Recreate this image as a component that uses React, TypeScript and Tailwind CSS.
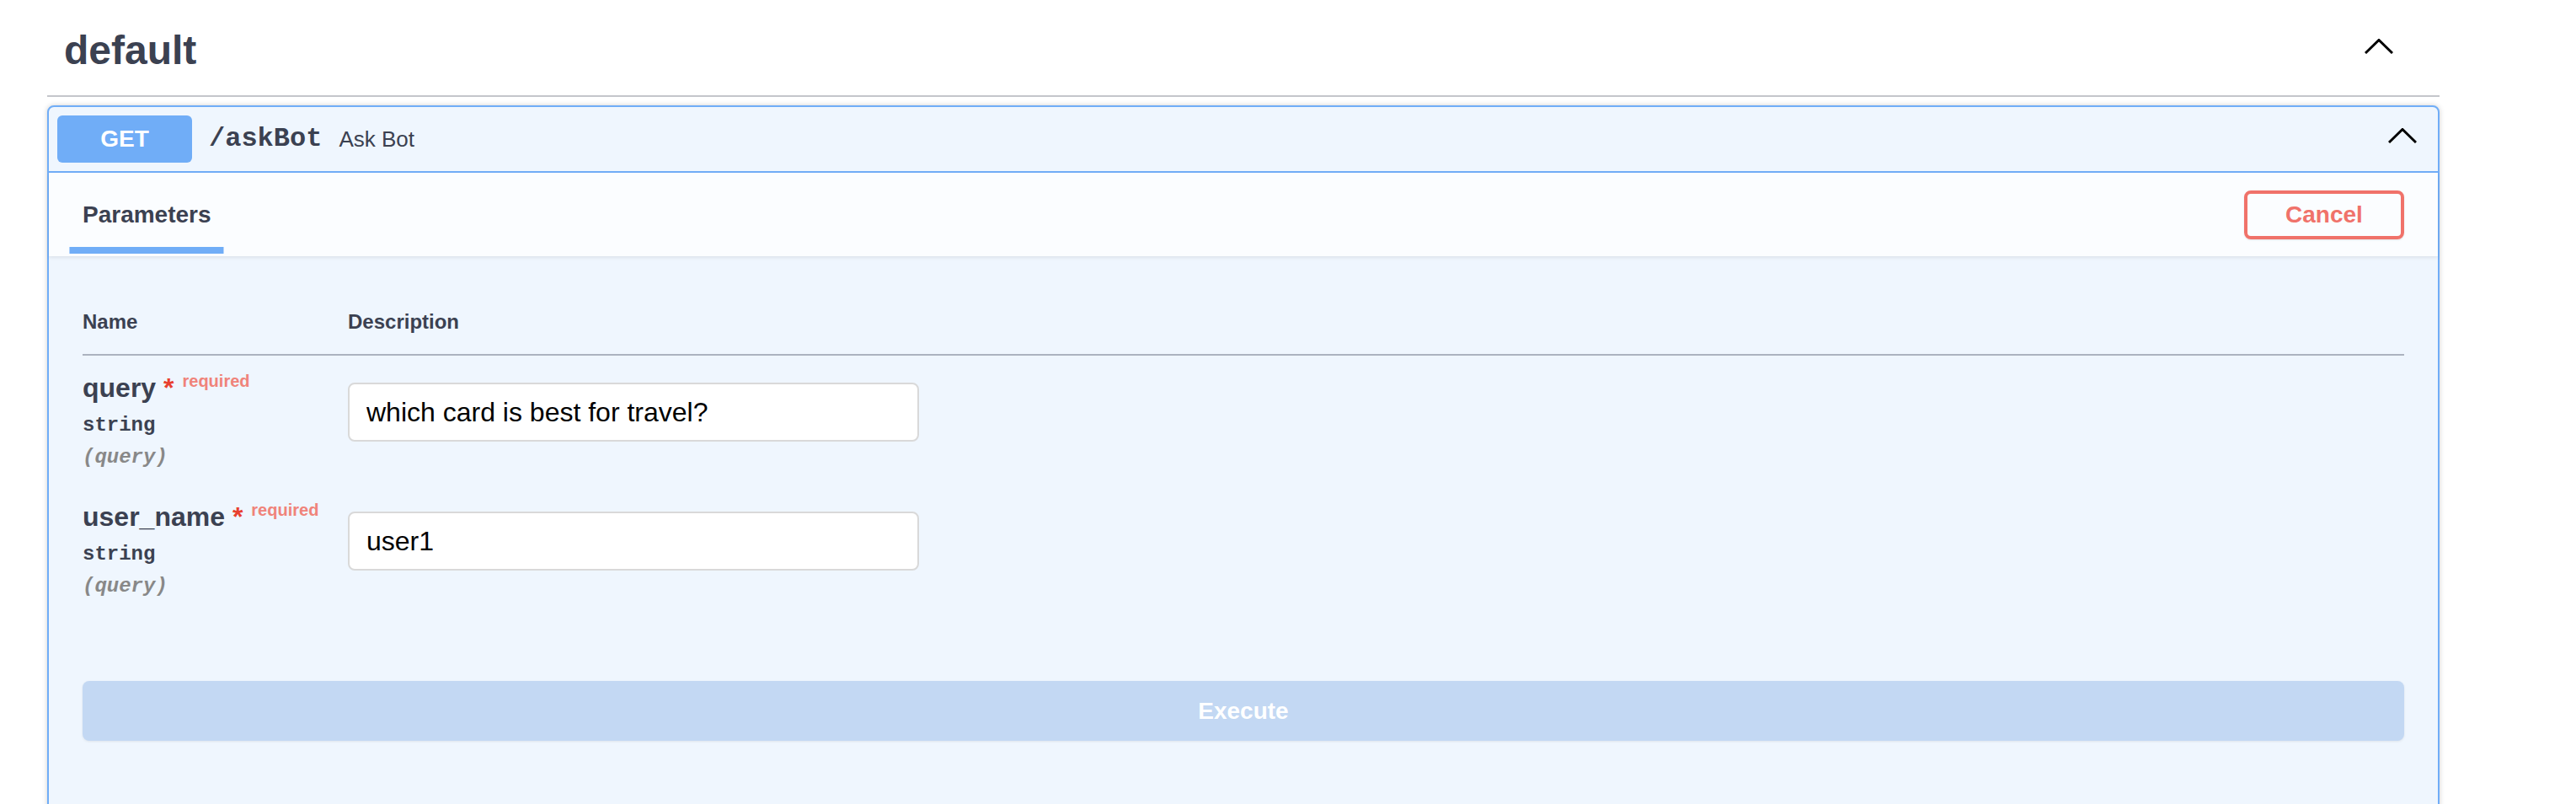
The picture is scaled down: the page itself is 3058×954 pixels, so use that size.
import React from "react";

function Chevron({ className = "" }: { className?: string }) {
  return (
    <svg width="34" height="18" viewBox="0 0 34 18" className={`flex-none ${className}`}>
      <polyline points="1,17 17,1.5 33,17" fill="none" stroke="#000" strokeWidth="3" />
    </svg>
  );
}

interface Param {
  name: string;
  type: string;
  location: string;
  value: string;
}

const PARAMS: Param[] = [
  { name: "query", type: "string", location: "query", value: "which card is best for travel?" },
  { name: "user_name", type: "string", location: "query", value: "user1" },
];

function ParamRow({ p }: { p: Param }) {
  return (
    <div className="flex pt-[20px] pb-[18px]">
      {/* name column */}
      <div className="w-[315px] flex-none">
        <div className="text-[32px] leading-[37px] font-bold text-[#3b4151] whitespace-nowrap">
          {p.name}
          <span className="leading-none text-[#e8402f]">{"\u00a0*"}</span>
          <span className="relative -top-[12px] px-[10px] text-[20px] leading-none font-bold text-[#f0837a]">required</span>
        </div>
        <div className="pt-[12px] pb-[10px] font-['Liberation_Mono',monospace] text-[24px] leading-[28px] font-bold text-[#3b4151]">
          {p.type}
        </div>
        <div className="font-['Liberation_Mono',monospace] text-[24px] leading-[28px] font-bold italic text-[#888888]">
          ({p.location})
        </div>
      </div>

      {/* description column */}
      <div className="flex-1">
        <input
          type="text"
          defaultValue={p.value}
          className="mt-[12px] w-[678px] h-[70px] px-[20px] bg-white border-2 border-[#d9d9d9] rounded-[8px] text-[32px] text-black font-['Liberation_Sans',Arial,sans-serif] outline-none"
        />
      </div>
    </div>
  );
}

export default function App() {
  return (
    <div className="w-[3058px] h-[954px] overflow-hidden bg-white font-['Liberation_Sans',Arial,sans-serif]">
      <div className="ml-[56px] w-[2840px]">
        {/* tag title */}
        <div className="h-[115px] flex items-center pl-[20px] pr-[55px] border-b-2 border-[#c4c6cb]">
          <h4 className="flex-1 pt-[6px] text-[48px] font-bold text-[#3b4151]">default</h4>
          <Chevron className="mb-[4px]" />
        </div>

        {/* operation block */}
        <div className="mt-[10px] border-2 border-[#70adf7] rounded-[8px] bg-[#eff6fe] shadow-[0_0_6px_rgba(0,0,0,0.19)]">
          {/* summary */}
          <div className="flex items-center py-[10px] pl-[10px] pr-[25px] border-b-2 border-[#70adf7]">
            <span className="w-[160px] h-[56px] flex-none flex items-center justify-center rounded-[6px] bg-[#70adf7] text-white text-[28px] font-bold">
              GET
            </span>
            <span className="px-[20px] font-['Liberation_Mono',monospace] text-[32px] font-bold text-[#3b4151]">
              /askBot
            </span>
            <span className="flex-1 text-[26px] text-[#3b4151]">Ask Bot</span>
            <Chevron className="mb-[8px]" />
          </div>

          {/* section header */}
          <div className="h-[99px] flex items-center justify-between px-[40px] bg-[#fbfdff] shadow-[0_2px_4px_rgba(0,0,0,0.08)]">
            <div className="relative">
              <h4 className="text-[28px] leading-[32px] font-bold text-[#3b4151]">Parameters</h4>
              <span className="absolute left-1/2 -translate-x-1/2 -bottom-[30px] w-[120%] h-[8px] bg-[#70adf7]" />
            </div>
            <button className="w-[190px] h-[58px] border-4 border-[#f0726a] rounded-[8px] text-[28px] font-bold text-[#f0726a] bg-transparent shadow-[0_1px_2px_rgba(0,0,0,0.1)]">
              Cancel
            </button>
          </div>

          {/* body */}
          <div className="px-[40px] pt-[40px] pb-[120px]">
            <div className="flex py-[24px] text-[24px] leading-[28px] font-bold text-[#3b4151] border-b-2 border-[#acb3bf]">
              <div className="w-[315px] flex-none">Name</div>
              <div>Description</div>
            </div>

            {PARAMS.map(p => (
              <ParamRow key={p.name} p={p} />
            ))}

            <div className="pt-[80px]">
              <button className="w-full h-[71px] rounded-[8px] bg-[#c3d8f3] text-white text-[28px] font-bold shadow-[0_1px_3px_rgba(0,0,0,0.08)]">
                Execute
              </button>
            </div>
          </div>
        </div>
      </div>
    </div>
  );
}
